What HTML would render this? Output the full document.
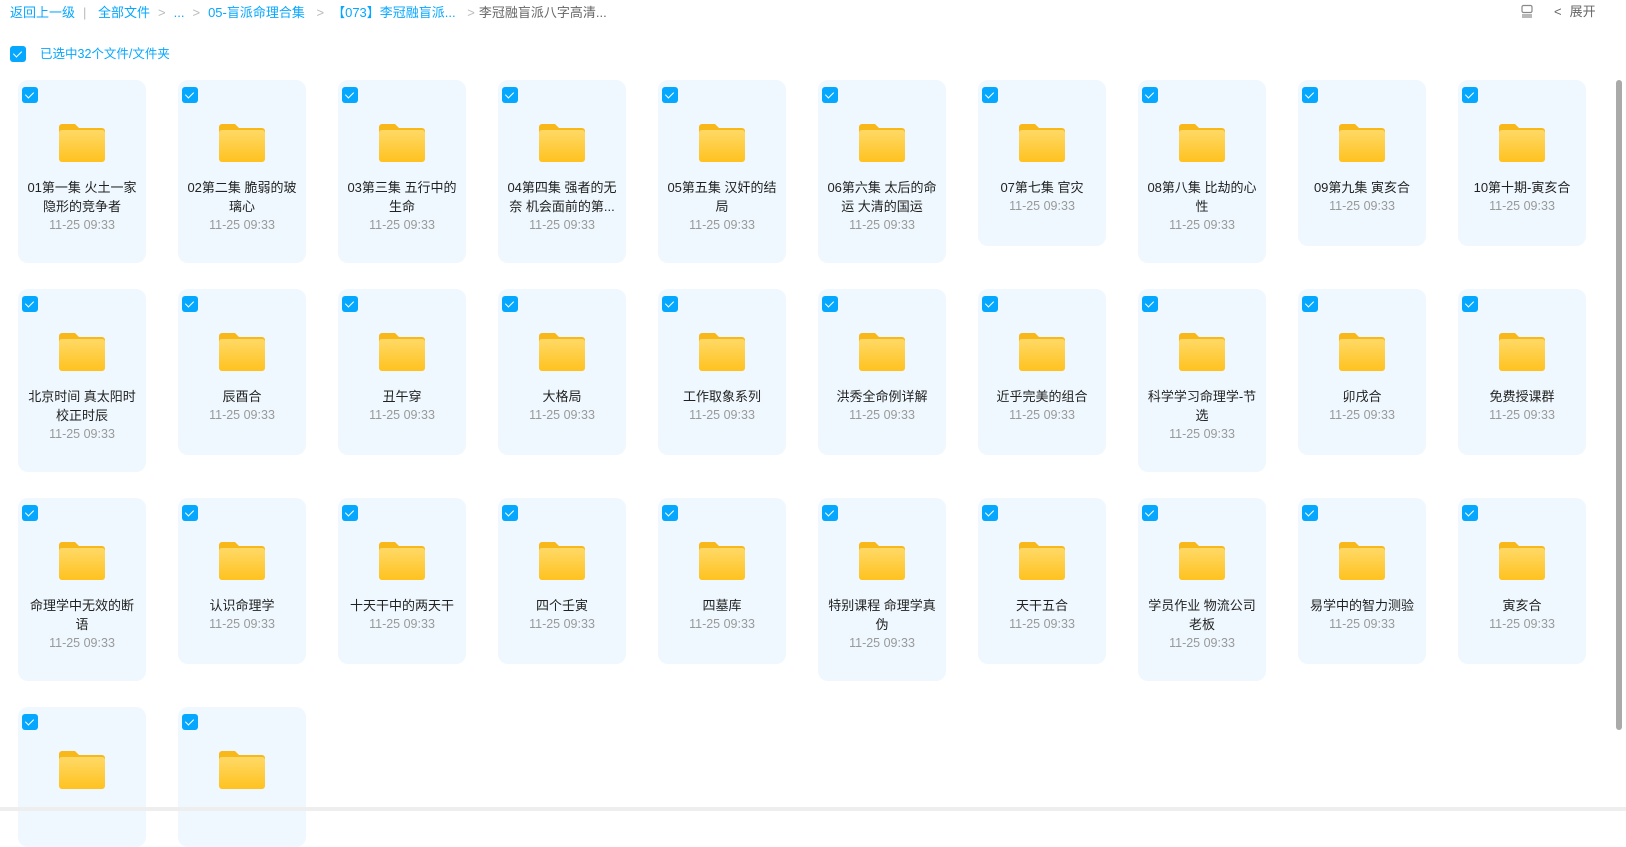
<!DOCTYPE html>
<html><head><meta charset="utf-8"><style>
*{margin:0;padding:0;box-sizing:border-box}
body{width:1626px;height:811px;overflow:hidden;background:#fff;font-family:"Liberation Sans","Noto Sans CJK SC",sans-serif;position:relative}
.bc{position:absolute;top:4px;left:10px;font-size:13px;color:#06a7ff;white-space:nowrap;line-height:18px}
.bc span{margin-right:8px}
.bc .g{color:#bbb}
.bc .d{color:#666}
.tr{position:absolute;top:3px;left:1520px;font-size:13px;color:#666;line-height:18px}
.sel{position:absolute;top:46px;left:10px;font-size:12.5px;color:#06a7ff;line-height:16px}
.cb{width:16px;height:16px;border-radius:3px;background:#06a7ff;position:absolute}
.cb:after{content:"";position:absolute;left:5px;top:3px;width:4px;height:7px;border:solid #fff;border-width:0 1.5px 1.5px 0;transform:rotate(45deg)}
.card{position:absolute;width:128px;background:#eff8fe;border-radius:10px}
.card .cb{left:4px;top:7px}
.fold{position:absolute;left:41px;top:42px;width:46px;height:40px}
.nm{position:absolute;top:98px;left:9px;right:9px;text-align:center;font-size:13px;color:#222;line-height:19px}
.dt{color:#999;font-size:12.5px}
.sb{position:absolute;left:1616px;top:80px;width:6px;height:650px;background:#aaa;border-radius:3px}
.bot{position:absolute;left:0;top:807px;width:1626px;height:4px;background:#eee}
</style></head><body>
<div class="bc"><span>返回上一级</span><span class="g">|</span> <span>全部文件</span><span class="g">&gt;</span><span>...</span><span class="g">&gt;</span><span>05-盲派命理合集</span> <span class="g">&gt;</span><span>【073】李冠融盲派...</span> <span class="g">&gt;</span><span class="d" style="margin-left:-4px">李冠融盲派八字高清...</span></div>
<div class="tr"><svg width="14" height="14" viewBox="0 0 14 14" style="vertical-align:-2px"><rect x="2" y="1.5" width="10" height="7" rx="1.5" fill="none" stroke="#888" stroke-width="1.2"/><line x1="2" y1="11" x2="12" y2="11" stroke="#888" stroke-width="1.2"/><line x1="2" y1="13" x2="12" y2="13" stroke="#888" stroke-width="1.2"/></svg><span style="margin-left:20px">&lt;</span><span style="margin-left:8px">展开</span></div>
<div class="sel"><div class="cb" style="left:0;top:0"></div><span style="margin-left:30px">已选中32个文件/文件夹</span></div>
<div id="g"></div>
<div class="sb"></div><div class="bot"></div>
<script>
var items=[["01第一集 火土一家隐形的竞争者",2],["02第二集 脆弱的玻璃心",2],["03第三集 五行中的生命",2],["04第四集 强者的无奈 机会面前的第...",2],["05第五集 汉奸的结局",2],["06第六集 太后的命运 大清的国运",2],["07第七集 官灾",1],["08第八集 比劫的心性",2],["09第九集 寅亥合",1],["10第十期-寅亥合",1],
["北京时间 真太阳时<br>校正时辰",2],["辰酉合",1],["丑午穿",1],["大格局",1],["工作取象系列",1],["洪秀全命例详解",1],["近乎完美的组合",1],["科学学习命理学-节选",2],["卯戌合",1],["免费授课群",1],
["命理学中无效的断<br>语",2],["认识命理学",1],["十天干中的两天干",1],["四个壬寅",1],["四墓库",1],["特别课程 命理学真<br>伪",2],["天干五合",1],["学员作业 物流公司<br>老板",2],["易学中的智力测验",1],["寅亥合",1],["",3],["",3]];
var f='<svg class="fold" viewBox="0 0 46 40"><defs><linearGradient id="a" x1="0" y1="0" x2="0" y2="1"><stop offset="0" stop-color="#ffd966"/><stop offset="1" stop-color="#ffc21f"/></linearGradient></defs><path d="M3 2h13l4 4h23a3 3 0 0 1 3 3v4H0V5a3 3 0 0 1 3-3z" fill="#f9b81a"/><rect x="0" y="8" width="46" height="32" rx="3" fill="url(#a)"/></svg>';
var h='';
items.forEach(function(it,i){var c=i%10,r=Math.floor(i/10);var x=18+c*160,y=80+r*209;
var ht=it[1]==2?183:it[1]==1?166:140;
h+='<div class="card" style="left:'+x+'px;top:'+y+'px;height:'+ht+'px"><div class="cb"></div>'+f+(it[1]<3?'<div class="nm">'+it[0]+'<div class="dt">11-25 09:33</div></div>':'')+'</div>';});
document.getElementById('g').innerHTML=h;
</script>
</body></html>
